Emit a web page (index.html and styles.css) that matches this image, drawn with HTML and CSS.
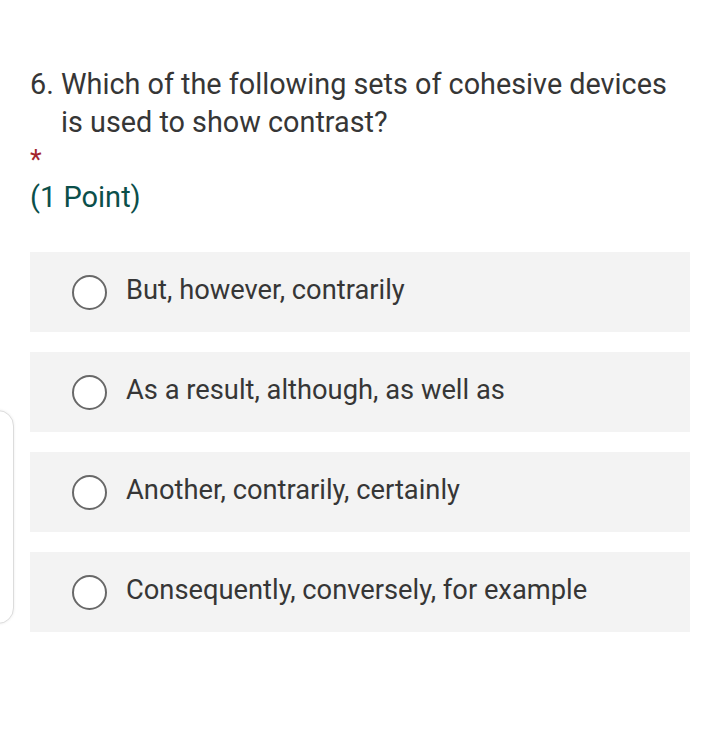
FILE: index.html
```html
<!DOCTYPE html>
<html>
<head>
<meta charset="utf-8">
<link rel="stylesheet" href="styles.css">
</head>
<body>
<div class="page">
  <div class="question">
    <div class="q-title"><span class="q-num">6.</span><span class="q-text">Which of the following sets of cohesive devices is used to show contrast?</span></div>
    <div class="required">*</div>
    <div class="points">(1 Point)</div>
  </div>
  <div class="options">
    <label class="option"><span class="radio"></span><span class="opt-text">But, however, contrarily</span></label>
    <label class="option"><span class="radio"></span><span class="opt-text">As a result, although, as well as</span></label>
    <label class="option"><span class="radio"></span><span class="opt-text">Another, contrarily, certainly</span></label>
    <label class="option"><span class="radio"></span><span class="opt-text">Consequently, conversely, for example</span></label>
  </div>
  <div class="side-panel"></div>
</div>
</body>
</html>
```

FILE: styles.css
```css
html, body {
  margin: 0;
  padding: 0;
  background: #ffffff;
}
body {
  font-family: Roboto, "Noto Sans", sans-serif;
  color: #333333;
}
.page {
  position: relative;
  width: 707px;
  height: 736px;
  overflow: hidden;
  padding: 65px 17px 0 30px;
  box-sizing: border-box;
}
.question {
  padding-right: 13px;
}
.q-title {
  display: flex;
  font-size: 28.8px;
  line-height: 38px;
  color: #363636;
}
.q-num {
  flex: none;
  width: 31px;
}
.q-text {
  flex: 1;
}
.required {
  color: #a4262c;
  font-size: 27px;
  line-height: 30px;
  margin-top: 4px;
  height: 26px;
}
.points {
  color: #0b4f4a;
  font-size: 29px;
  line-height: 40px;
  margin-top: 6px;
}
.options {
  display: flex;
  flex-direction: column;
  gap: 20px;
  margin-top: 35px;
}
.option {
  display: flex;
  align-items: center;
  height: 80px;
  background: #f3f3f3;
  padding-left: 42px;
  box-sizing: border-box;
}
.radio {
  flex: none;
  width: 35px;
  height: 35px;
  border: 2px solid #686868;
  border-radius: 50%;
  box-sizing: border-box;
  background: #ffffff;
}
.opt-text {
  margin-left: 19px;
  font-size: 27.3px;
  color: #363636;
  margin-top: -4px;
}
.side-panel {
  position: absolute;
  left: -40px;
  top: 410px;
  width: 52px;
  height: 212px;
  border: 1px solid #dcdcdc;
  border-radius: 16px;
  background: #ffffff;
  box-shadow: 0 0 3px rgba(0,0,0,0.08);
}
```
